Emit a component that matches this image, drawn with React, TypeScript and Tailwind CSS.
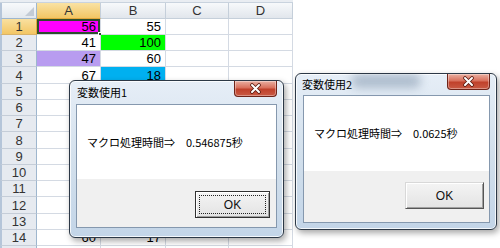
import React from "react";

type Cell = { v?: string; bg?: string; sel?: boolean };
type Row = { n: number; h: string; cells: Cell[]; hideNum?: boolean };

const rows: Row[] = [
  { n: 1, h: "h-[16px]", cells: [{ v: "56", bg: "bg-[#ff00ff]", sel: true }, { v: "55" }, {}, {}] },
  { n: 2, h: "h-[16px]", cells: [{ v: "41" }, { v: "100", bg: "bg-[#00ff00]" }, {}, {}] },
  { n: 3, h: "h-[16px]", cells: [{ v: "47", bg: "bg-[#b89cf0]" }, { v: "60" }, {}, {}] },
  { n: 4, h: "h-[17px]", cells: [{ v: "67" }, { v: "18", bg: "bg-[#00b0f0]" }, {}, {}] },
  { n: 5, h: "h-[16px]", cells: [{}, {}, {}, {}] },
  { n: 6, h: "h-[16px]", cells: [{}, {}, {}, {}] },
  { n: 7, h: "h-[16px]", cells: [{}, {}, {}, {}] },
  { n: 8, h: "h-[17px]", cells: [{}, {}, {}, {}] },
  { n: 9, h: "h-[16px]", cells: [{}, {}, {}, {}] },
  { n: 10, h: "h-[16px]", cells: [{}, {}, {}, {}] },
  { n: 11, h: "h-[16px]", cells: [{}, {}, {}, {}] },
  { n: 12, h: "h-[17px]", cells: [{}, {}, {}, {}] },
  { n: 13, h: "h-[16px]", cells: [{}, {}, {}, {}] },
  { n: 14, h: "h-[16px]", cells: [{ v: "60" }, { v: "17" }, {}, {}] },
  { n: 15, h: "h-[16px]", cells: [{}, {}, {}, {}], hideNum: true },
];

const colW = ["w-[64px]", "w-[65px]", "w-[63px]", "w-[64px]"];
const colL = ["A", "B", "C", "D"];

function CloseBtn() {
  return (
    <div className="w-[43px] h-[16px] rounded-b-[4px] border border-t-0 border-[#6e2419] bg-[linear-gradient(#eab0a2,#d8705c_45%,#c0412b_55%,#c95a44)] flex items-center justify-center shadow-[inset_0_0_0_1px_rgba(255,255,255,0.35)]">
      <svg width="13" height="11" viewBox="0 0 13 11">
        <path d="M3 2 L10 9 M10 2 L3 9" stroke="#5a1a10" strokeWidth="3.6" strokeLinecap="round" />
        <path d="M3 2 L10 9 M10 2 L3 9" stroke="#ffffff" strokeWidth="2" strokeLinecap="round" />
      </svg>
    </div>
  );
}

function Dialog(props: {
  title: string;
  text: string;
  outer: string;
  titleH: string;
  titlePl: string;
  pad: string;
  whiteH: string;
  btnBox: string;
  focused?: boolean;
  glass?: boolean;
}) {
  return (
    <div
      className={`absolute ${props.outer} rounded-[6px] border border-[#2c3846] bg-[linear-gradient(#e6eef7,#d3e0ec_50%,#c3d5e8)] shadow-[inset_0_0_0_1px_rgba(255,255,255,0.8),2px_3px_6px_rgba(0,0,0,0.35)] flex flex-col overflow-hidden`}
    >
      <div className={`relative ${props.titleH} flex items-start justify-between shrink-0`}>
        {props.glass && (
          <div className="absolute left-[55px] top-[0px] w-[70px] h-[14px] rounded-full bg-[#8a9db2] opacity-60 blur-[5px]" />
        )}
        <div className={`relative self-center ${props.titlePl} text-[11px] leading-none text-black font-['Noto_Sans_CJK_JP',sans-serif]`}>
          {props.title}
        </div>
        <div className="relative mr-[6px]">
          <CloseBtn />
        </div>
      </div>
      <div className={`flex-1 flex flex-col ${props.pad}`}>
        <div className="flex-1 flex flex-col border border-[#8598ae] bg-white">
          <div className={`${props.whiteH} bg-white flex items-center pl-[10px] text-[11px] text-black font-['Noto_Sans_CJK_JP',sans-serif] whitespace-pre`}>
            {props.text}
          </div>
          <div className="flex-1 bg-[#f0f0f0] flex items-start justify-end">
            <div
              className={`${props.btnBox} flex items-center justify-center text-[12px] text-[#111] font-['Liberation_Sans',sans-serif] bg-[linear-gradient(#f4f4f4,#e3e3e3)] border ${
                props.focused ? "border-[#303030]" : "border-t-[#d8d8d8] border-l-[#d8d8d8] border-r-[#555] border-b-[#555]"
              } shadow-[inset_1px_1px_0_#ffffff,inset_-1px_-1px_0_#a0a0a0]`}
            >
              {props.focused ? (
                <div className="w-[calc(100%-6px)] h-[calc(100%-6px)] border border-dotted border-[#222] flex items-center justify-center">
                  OK
                </div>
              ) : (
                "OK"
              )}
            </div>
          </div>
        </div>
      </div>
    </div>
  );
}

export default function App() {
  return (
    <div className="relative w-[500px] h-[248px] overflow-hidden bg-white font-['Liberation_Sans','Noto_Sans_CJK_JP',sans-serif]">
      <div className="flex flex-col w-[293px]">
        <div className="h-[3px] bg-[#e9edf2] border-b border-[#c9d3de]" />
        <div className="flex h-[16px]">
          <div className="w-[37px] border-l-2 border-l-[#b5c5d9] bg-[linear-gradient(#f7f9fb,#e3e8ee)] border-r border-b border-[#9eb6ce] flex items-end justify-end pr-[2px] pb-[2px]">
            <svg width="9" height="9" viewBox="0 0 9 9">
              <path d="M9 0 L9 9 L0 9 Z" fill="#c3cbd5" />
            </svg>
          </div>
          {colL.map((c, i) => (
            <div
              key={c}
              className={`${colW[i]} border-r border-b flex items-center justify-center text-[13px] leading-none ${
                i === 0
                  ? "bg-[linear-gradient(#f9e2a4,#f3c664)] border-r-[#c5cfda] border-b-[#e3a73a] text-[#333]"
                  : "bg-[linear-gradient(#f7f9fb,#e1e6ec)] border-[#c5cfda] text-[#333]"
              }`}
            >
              {c}
            </div>
          ))}
        </div>
        {rows.map((r) => (
          <div key={r.n} className={`flex ${r.h}`}>
            <div
              className={`w-[37px] border-l-2 border-l-[#b5c5d9] border-r border-b flex items-center justify-center text-[13px] leading-none text-[#333] ${
                r.n === 1
                  ? "bg-[linear-gradient(#f9e0a0,#f3c664)] border-r-[#e3a73a] border-b-[#d9b26a]"
                  : "bg-[#e6eaf0] border-r-[#9eb6ce] border-b-[#c5cdd8]"
              }`}
            >
              {r.hideNum ? "" : r.n}
            </div>
            {r.cells.map((c, i) => (
              <div
                key={i}
                className={`relative ${colW[i]} border-r border-b border-[#d4dae3] ${c.bg ?? "bg-white"} flex items-center justify-end pr-[4px] text-[13px] leading-none text-black ${
                  c.sel ? "shadow-[inset_0_0_0_2px_#2d4d2d]" : ""
                }`}
              >
                {c.v}
                {c.sel && (
                  <div className="absolute -right-[3px] -bottom-[3px] w-[5px] h-[5px] bg-[#2d4d2d] border border-white" />
                )}
              </div>
            ))}
          </div>
        ))}
      </div>

      <Dialog
        title="変数使用1"
        text={"マクロ処理時間⇒　0.546875秒"}
        outer="left-[69px] top-[80px] w-[215px] h-[158px]"
        titleH="h-[23px]"
        titlePl="pl-[7px]"
        pad="pl-[6px] pr-[6px] pb-[9px]"
        whiteH="h-[74px]"
        btnBox="mt-[12px] mr-[6px] w-[75px] h-[27px]"
        focused
      />
      <Dialog
        title="変数使用2"
        text={"マクロ処理時間⇒　0.0625秒"}
        outer="left-[295px] top-[73px] w-[202px] h-[157px]"
        titleH="h-[21px]"
        titlePl="pl-[6px]"
        pad="pl-[7px] pr-[6px] pb-[6px]"
        whiteH="h-[75px]"
        btnBox="mt-[11px] mr-[5px] w-[79px] h-[27px]"
        glass
      />
    </div>
  );
}
